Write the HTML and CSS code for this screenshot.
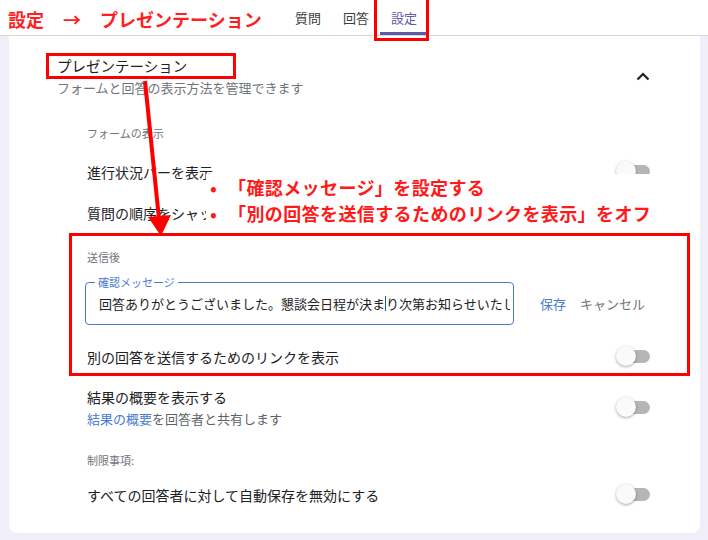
FILE: index.html
```html
<!DOCTYPE html>
<html lang="ja">
<head>
    <meta charset="UTF-8">
    <title>設定 | プレゼンテーション</title>
    <link rel="stylesheet" href="styles.css">
</head>
<body>
    <div class="topbar">
        <div class="topbar-title">
            <span>設定</span><span class="arrow">→</span><span>プレゼンテーション</span>
        </div>
        <div class="tabs">
            <div class="tab">質問</div>
            <div class="tab">回答</div>
            <div class="tab selected">設定</div>
        </div>
        <div class="mark mark-tab"></div>
    </div>

    <div class="card">
        <div class="card-head">
            <div>
                <div class="card-title">プレゼンテーション</div>
                <div class="card-sub">フォームと回答の表示方法を管理できます</div>
            </div>
            <svg class="chevron" width="14" height="10" viewBox="0 0 14 10">
                <path d="M1.5 8.5 L7 3 L12.5 8.5" fill="none" stroke="#202124" stroke-width="2.2"/>
            </svg>
        </div>

        <div class="settings">
            <div class="group-label first">フォームの表示</div>
            <div class="row">
                <span>進行状況バーを表示</span>
                <span class="toggle"></span>
            </div>
            <div class="row">
                <span>質問の順序をシャッフル</span>
                <span class="toggle"></span>
            </div>

            <div class="group-label after">送信後</div>
            <div class="message-line">
                <div class="field">
                    <span class="field-label">確認メッセージ</span>
                    <div class="field-text">回答ありがとうございました。懇談会日程が決ま<span class="caret"></span>り次第お知らせいたします。</div>
                </div>
                <span class="btn-save">保存</span>
                <span class="btn-cancel">キャンセル</span>
            </div>
            <div class="row">
                <span>別の回答を送信するためのリンクを表示</span>
                <span class="toggle"></span>
            </div>

            <div class="row tall">
                <div>
                    <div>結果の概要を表示する</div>
                    <div class="row-sub"><span class="link">結果の概要</span>を回答者と共有します</div>
                </div>
                <span class="toggle"></span>
            </div>

            <div class="group-label limits">制限事項:</div>
            <div class="row">
                <span>すべての回答者に対して自動保存を無効にする</span>
                <span class="toggle"></span>
            </div>
        </div>
    </div>

    <!-- 注釈 -->
    <div class="mark mark-title"></div>
    <div class="mark mark-after"></div>
    <svg class="pointer" width="40" height="170" viewBox="0 0 40 170">
        <line x1="5" y1="2" x2="19" y2="140" stroke="#ff0000" stroke-width="4"/>
        <polygon points="8,138 31,136 21,157" fill="#ff0000"/>
    </svg>
    <div class="note">
        <div><span class="bullet">•</span>「確認メッセージ」を設定する</div>
        <div><span class="bullet">•</span>「別の回答を送信するためのリンクを表示」をオフ</div>
    </div>
</body>
</html>
```

FILE: styles.css
```css
body {
    margin: 0;
    background-color: #f0eef8;
    font-family: "Noto Sans CJK JP", "Noto Sans", sans-serif;
    color: #202124;
    width: 708px;
    height: 540px;
    overflow: hidden;
    position: relative;
}

.topbar {
    height: 35px;
    background: #fff;
    border-bottom: 1px solid #d6d6d6;
    display: flex;
    align-items: stretch;
    position: relative;
}
.topbar-title {
    padding-left: 8px;
    font-size: 18px;
    font-weight: bold;
    color: #ff1f1f;
    line-height: 38px;
    width: 276px;
    white-space: nowrap;
}
.topbar-title .arrow {
    margin: 0 19px 0 19px;
}
.tabs {
    display: flex;
}
.tab {
    padding: 0 11px;
    font-size: 13px;
    line-height: 36px;
    color: #3c4043;
}
.tab.selected {
    color: #5f5ba8;
    box-shadow: inset 0 -3px 0 #5f5ba8;
}

.card {
    background: #fff;
    margin-left: 9px;
    width: 691px;
    height: 497px;
    border-radius: 0 0 8px 8px;
    box-sizing: border-box;
    padding: 20px 50px 0 48px;
}
.card-head {
    display: flex;
    justify-content: space-between;
    align-items: center;
}
.card-title {
    font-size: 14.5px;
    line-height: 20px;
}
.card-sub {
    font-size: 13px;
    line-height: 18px;
    margin-top: 3px;
    color: #70757a;
}
.chevron {
    margin-top: -1px;
}

.settings {
    padding-left: 30px;
}
.group-label {
    font-size: 11px;
    line-height: 16px;
    color: #70757a;
}
.group-label.first {
    margin-top: 28px;
    margin-bottom: 10px;
}
.group-label.after {
    margin-top: 16px;
    margin-bottom: 17px;
}
.group-label.limits {
    margin-top: 15px;
    margin-bottom: 6px;
}
.row {
    display: flex;
    justify-content: space-between;
    align-items: center;
    height: 41px;
    font-size: 14px;
}
.row.tall {
    height: 60px;
}
.row-sub {
    font-size: 13px;
    color: #5f6368;
    margin-top: 2px;
}
.row-sub .link {
    color: #4a7bd0;
}
.toggle {
    width: 28px;
    height: 13px;
    background: #b6b6b6;
    border-radius: 7px;
    position: relative;
}
.toggle::before {
    content: "";
    position: absolute;
    left: -6px;
    top: -4px;
    width: 20px;
    height: 20px;
    border-radius: 50%;
    background: #fafafa;
    box-shadow: 0 1px 3px rgba(0, 0, 0, 0.35);
}

.message-line {
    display: flex;
    align-items: center;
    margin-left: -2px;
    margin-bottom: 11px;
}
.field {
    width: 429px;
    height: 43px;
    box-sizing: border-box;
    border: 1px solid #4a7bd0;
    border-radius: 4px;
    position: relative;
    display: flex;
    align-items: center;
    padding-left: 13px;
}
.field-label {
    position: absolute;
    top: -9px;
    left: 9px;
    background: #fff;
    padding: 0 3px;
    font-size: 11px;
    line-height: 16px;
    color: #4a7bd0;
}
.field-text {
    font-size: 13px;
    white-space: nowrap;
    overflow: hidden;
    width: 411px;
}
.caret {
    display: inline-block;
    width: 1px;
    height: 15px;
    background: #1a57c8;
    vertical-align: -2px;
}
.btn-save {
    margin-left: 26px;
    font-size: 13px;
    color: #4a7bd0;
}
.btn-cancel {
    margin-left: 14px;
    font-size: 13px;
    color: #70757a;
}

.mark {
    position: absolute;
    border: 3px solid #ff0000;
    box-sizing: border-box;
}
.mark-tab {
    left: 374px;
    top: -3px;
    width: 55px;
    height: 44px;
}
.mark-title {
    left: 46px;
    top: 53px;
    width: 190px;
    height: 26px;
}
.mark-after {
    left: 69px;
    top: 233px;
    width: 621px;
    height: 143px;
}
.pointer {
    position: absolute;
    left: 140px;
    top: 79px;
}
.note {
    position: absolute;
    left: 206px;
    top: 174px;
    width: 450px;
    background: #fff;
    color: #ff1a1a;
    font-size: 18px;
    font-weight: bold;
    line-height: 26px;
    letter-spacing: 0.4px;
    white-space: nowrap;
}
.note .bullet {
    display: inline-block;
    width: 18px;
    padding-left: 4px;
}
```
